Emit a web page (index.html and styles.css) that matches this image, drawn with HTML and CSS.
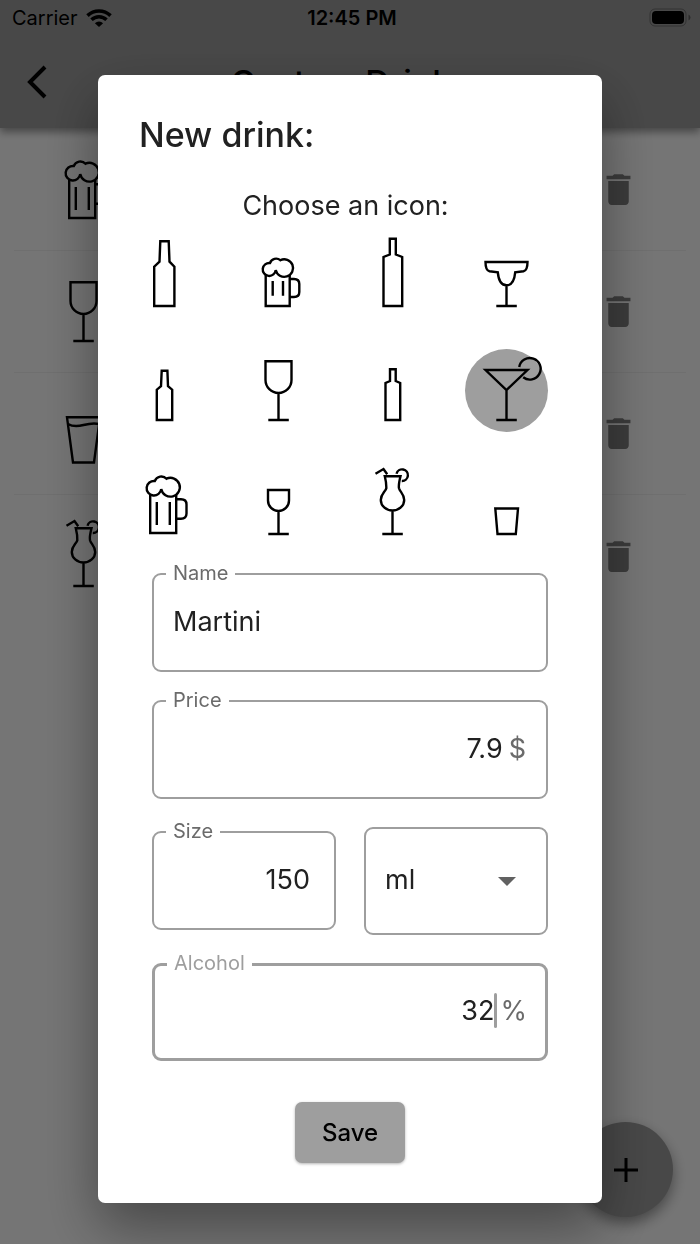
FILE: index.html
```
<!DOCTYPE html>
<html lang="en">
<head>
    <meta charset="UTF-8">
    <meta name="viewport" content="width=device-width, initial-scale=1.0">
    <title>Custom Drinks</title>
    <link rel="stylesheet" href="styles.css">
</head>
<body>
    <!-- Shared icon shapes -->
    <svg class="sprite" aria-hidden="true">
        <symbol id="bottle-large" viewBox="0 0 83 83">
            <path d="M31.2 71V31.7L36.5 26.7L37.3 6.3H45.7L46.5 26.7L51.4 31.7V71Z"/>
        </symbol>
        <symbol id="beer-small" viewBox="0 0 83 83">
            <path d="M28.7 40V71H52.7V40M35.7 46V60.7M46 46V60.7M52.7 44H57Q62.3 44 62.3 49V57Q62.3 62 57 62H52.7"/>
            <path d="M38.7 35A6.5 6.5 0 1 1 33 28A6.5 6.5 0 0 1 43.3 25.2A8.8 8.8 0 1 1 38.7 35Z"/>
        </symbol>
        <symbol id="spirit-large" viewBox="0 0 83 83">
            <path d="M32.5 71V22L38.8 19.5V3.7H44.8V19.5L51.2 22V71Z"/>
        </symbol>
        <symbol id="margarita" viewBox="0 0 83 83">
            <path d="M20.5 27H62.5Q62.5 35.5 58.5 36.3L50.2 37.3Q49 50.3 41.5 50.3T32.8 37.3L24.5 36.3Q20.5 35.5 20.5 27ZM41.5 50.3V71M31.3 71H51.8"/>
        </symbol>
        <symbol id="bottle-small" viewBox="0 0 83 83">
            <path d="M33.8 71V40.7L38 37.2L38.7 21.7H44.4L45 37.2L49.2 40.7V71Z"/>
        </symbol>
        <symbol id="wine-large" viewBox="0 0 83 83">
            <path d="M28.5 12.2H54.5V31A13 13 0 0 1 28.5 31ZM41.5 44V71M31.3 71H51.8"/>
        </symbol>
        <symbol id="spirit-small" viewBox="0 0 83 83">
            <path d="M34.5 71V34L39 32V20.3H44.7V32L49.2 34V71Z"/>
        </symbol>
        <symbol id="martini" viewBox="0 0 83 83">
            <path d="M20.5 21H62.5L41.5 41ZM41.5 41V71M31.3 71H51.8M54.2 18A10.8 10.8 0 1 1 58.2 28.3"/>
        </symbol>
        <symbol id="beer-large" viewBox="0 0 83 83">
            <path d="M27.2 32V70H53.2V32M33.8 39V62M46.8 39V62M53.2 36.3H58Q63.5 36.3 63.5 41.5V50.5Q63.5 55.7 58 55.7H53.2"/>
            <path d="M38.2 26A7.3 7.3 0 1 1 31.8 18A7 7 0 0 1 43.5 15.7A9.4 9.4 0 1 1 38.2 26Z"/>
        </symbol>
        <symbol id="wine-small" viewBox="0 0 83 83">
            <path d="M31 27H52V37.5A10.5 10.5 0 0 1 31 37.5ZM41.5 48V71M31.3 71H51.8"/>
        </symbol>
        <symbol id="hurricane" viewBox="0 0 83 83">
            <path d="M33.8 13.3H49.5Q47.3 22 48 25.3C49 29 53.2 31 53.2 37A11.7 10.5 0 0 1 29.8 37C29.8 31 34.2 29 35.3 25.3Q35.5 20 33.8 13.3ZM41.5 47.5V71M31.3 71H51.8"/>
            <path d="M24.5 10.7L32.5 6L36.2 11.3M45.5 10.7A5.8 5.8 0 1 1 50.8 18"/>
        </symbol>
        <symbol id="shot" viewBox="0 0 83 83">
            <path d="M30.3 45.5H53L50.8 71H32.5Z"/>
        </symbol>
        <symbol id="water" viewBox="0 0 83 83">
            <path d="M25 25.3H58L52 70.5H31ZM26 32Q32 35.5 41.5 33T57 32"/>
        </symbol>
        <symbol id="trash" viewBox="0 0 24 24">
            <path d="M6 19c0 1.1.9 2 2 2h8c1.1 0 2-.9 2-2V7H6v12zM19 4h-3.5l-1-1h-5l-1 1H5v2h14V4z"/>
        </symbol>
    </svg>

    <div class="screen">
        <header class="app-header">
            <div class="status-bar">
                <span class="carrier">
                    Carrier
                    <svg class="wifi" viewBox="0 0 26 18" aria-hidden="true">
                        <path d="M1.5 6.6A16.5 16.5 0 0 1 24.5 6.6M5.5 10.8A10.8 10.8 0 0 1 20.5 10.8"/>
                        <path class="solid" d="M8.9 14.2A6 6 0 0 1 17.1 14.2L13 18Z"/>
                    </svg>
                </span>
                <span class="clock">12:45 PM</span>
                <svg class="battery" viewBox="0 0 43 20" aria-hidden="true">
                    <rect class="case" x="1" y="1" width="36" height="17" rx="5"/>
                    <rect x="3" y="3" width="32" height="13" rx="4"/>
                    <path class="cap" d="M39.5 6.5Q41.5 7.5 41.5 9.5T39.5 12.5Z"/>
                </svg>
            </div>
            <div class="nav-bar">
                <button class="back" aria-label="Back">
                    <svg viewBox="0 0 24 36"><path d="M21 3L6 18L21 33"/></svg>
                </button>
                <h1>Custom Drinks</h1>
            </div>
        </header>

        <ul class="drink-list">
            <li>
                <svg class="drink-icon"><use href="#beer-large"/></svg>
                <button class="delete" aria-label="Delete"><svg><use href="#trash"/></svg></button>
            </li>
            <li>
                <svg class="drink-icon"><use href="#wine-large"/></svg>
                <button class="delete" aria-label="Delete"><svg><use href="#trash"/></svg></button>
            </li>
            <li>
                <svg class="drink-icon"><use href="#water"/></svg>
                <button class="delete" aria-label="Delete"><svg><use href="#trash"/></svg></button>
            </li>
            <li>
                <svg class="drink-icon"><use href="#hurricane"/></svg>
                <button class="delete" aria-label="Delete"><svg><use href="#trash"/></svg></button>
            </li>
        </ul>

        <button class="add" aria-label="Add drink">
            <svg viewBox="0 0 24 24"><path d="M12 0V24M0 12H24"/></svg>
        </button>
    </div>

    <div class="overlay">
        <form class="dialog" role="dialog" aria-labelledby="dialogTitle">
            <h2 id="dialogTitle">New drink:</h2>
            <p class="hint">Choose an icon:</p>

            <div class="icon-grid" role="radiogroup" aria-label="Choose an icon">
                <label><input type="radio" name="icon" aria-label="Large bottle"><svg class="drink-icon"><use href="#bottle-large"/></svg></label>
                <label><input type="radio" name="icon" aria-label="Small beer"><svg class="drink-icon"><use href="#beer-small"/></svg></label>
                <label><input type="radio" name="icon" aria-label="Large spirit"><svg class="drink-icon"><use href="#spirit-large"/></svg></label>
                <label><input type="radio" name="icon" aria-label="Margarita"><svg class="drink-icon"><use href="#margarita"/></svg></label>
                <label><input type="radio" name="icon" aria-label="Small bottle"><svg class="drink-icon"><use href="#bottle-small"/></svg></label>
                <label><input type="radio" name="icon" aria-label="Large wine"><svg class="drink-icon"><use href="#wine-large"/></svg></label>
                <label><input type="radio" name="icon" aria-label="Small spirit"><svg class="drink-icon"><use href="#spirit-small"/></svg></label>
                <label><input type="radio" name="icon" aria-label="Martini" checked><svg class="drink-icon"><use href="#martini"/></svg></label>
                <label><input type="radio" name="icon" aria-label="Large beer"><svg class="drink-icon"><use href="#beer-large"/></svg></label>
                <label><input type="radio" name="icon" aria-label="Small wine"><svg class="drink-icon"><use href="#wine-small"/></svg></label>
                <label><input type="radio" name="icon" aria-label="Cocktail"><svg class="drink-icon"><use href="#hurricane"/></svg></label>
                <label><input type="radio" name="icon" aria-label="Shot"><svg class="drink-icon"><use href="#shot"/></svg></label>
            </div>

            <div class="fields">
                <fieldset class="field">
                    <legend><label for="name">Name</label></legend>
                    <div class="control">
                        <input type="text" id="name" value="Martini">
                    </div>
                </fieldset>

                <fieldset class="field number">
                    <legend><label for="price">Price</label></legend>
                    <div class="control">
                        <input type="text" id="price" inputmode="decimal" value="7.9">
                        <span class="suffix">$</span>
                    </div>
                </fieldset>

                <div class="field-row">
                    <fieldset class="field number">
                        <legend><label for="size">Size</label></legend>
                        <div class="control roomy">
                            <input type="text" id="size" inputmode="numeric" value="150">
                        </div>
                    </fieldset>
                    <div class="unit">
                        <select id="unit" aria-label="Unit">
                            <option>ml</option>
                            <option>cl</option>
                            <option>l</option>
                        </select>
                    </div>
                </div>

                <fieldset class="field number active">
                    <legend><label for="alcohol">Alcohol</label></legend>
                    <div class="control">
                        <input type="text" id="alcohol" inputmode="decimal" value="32">
                        <span class="caret"></span>
                        <span class="suffix">%</span>
                    </div>
                </fieldset>
            </div>

            <button type="button" class="save">Save</button>
        </form>
    </div>
</body>
</html>
```
FILE: styles.css
```
* {
    box-sizing: border-box;
}
body {
    margin: 0;
    font-family: Inter, "Liberation Sans", sans-serif;
    color: #212121;
    background-color: #fff;
}
button {
    padding: 0;
    border: none;
    background: none;
    font-family: inherit;
    cursor: pointer;
}
svg {
    display: block;
}
.sprite {
    position: absolute;
    width: 0;
    height: 0;
}
.screen {
    min-height: 100vh;
}

/* Header */
.app-header {
    background-color: #9e9e9e;
    color: #000;
    box-shadow: 0 4px 8px rgba(0, 0, 0, 0.4);
}
.status-bar {
    display: grid;
    grid-template-columns: 1fr auto 1fr;
    align-items: center;
    height: 36px;
    padding: 0 8px 0 12px;
    font-size: 20px;
}
.carrier {
    display: flex;
    align-items: center;
    gap: 8px;
}
.wifi {
    width: 26px;
    height: 18px;
    fill: none;
    stroke: #000;
    stroke-width: 3.6;
}
.wifi .solid {
    fill: #000;
    stroke: none;
}
.clock {
    font-weight: 600;
}
.battery {
    justify-self: end;
    width: 43px;
    height: 20px;
}
.battery .case {
    fill: none;
    stroke: rgba(0, 0, 0, 0.3);
    stroke-width: 1;
}
.battery .cap {
    fill: rgba(0, 0, 0, 0.4);
}
.nav-bar {
    display: grid;
    grid-template-columns: 1fr auto 1fr;
    align-items: center;
    height: 92px;
    padding: 0 24px;
}
.nav-bar h1 {
    margin: 0;
    font-size: 34px;
    font-weight: 500;
}
.back {
    justify-self: start;
}
.back svg {
    width: 24px;
    height: 36px;
    fill: none;
    stroke: #000;
    stroke-width: 4;
}

/* List behind the dialog */
.drink-list {
    margin: 0;
    padding: 1px 14px;
    list-style: none;
}
.drink-list li {
    display: flex;
    align-items: center;
    justify-content: space-between;
    height: 122px;
    padding: 0 47px 0 28px;
    border-bottom: 1px solid #f2f2f2;
}
.drink-list li:last-child {
    border-bottom: none;
}
.drink-icon {
    width: 83px;
    height: 83px;
    fill: none;
    stroke: #000;
    stroke-width: 2.4;
}
.delete svg {
    width: 41px;
    height: 41px;
    fill: #828282;
}
.add {
    position: fixed;
    right: 27px;
    bottom: 27px;
    display: flex;
    align-items: center;
    justify-content: center;
    width: 95px;
    height: 95px;
    border-radius: 50%;
    background-color: #9e9e9e;
    box-shadow: 0 6px 14px rgba(0, 0, 0, 0.4);
}
.add svg {
    width: 24px;
    height: 24px;
    stroke: #000;
    stroke-width: 3;
}

/* Dialog */
.overlay {
    position: absolute;
    inset: 0;
    display: flex;
    align-items: center;
    padding: 34px 14% 0;
    background-color: rgba(0, 0, 0, 0.54);
}
.dialog {
    flex: 1;
    display: flex;
    flex-direction: column;
    min-width: 0;
    padding: 40px 0;
    border-radius: 7px;
    background-color: #fff;
    box-shadow: 0 24px 56px rgba(0, 0, 0, 0.4);
}
.dialog h2 {
    margin: 0;
    padding-left: 41px;
    font-size: 34px;
    line-height: 40px;
    font-weight: 500;
}
.hint {
    margin: 33px 0 11px;
    padding-right: 9px;
    font-size: 27px;
    line-height: 36px;
    text-align: center;
}
.icon-grid {
    display: grid;
    grid-template-columns: repeat(4, 83px);
    justify-content: space-between;
    row-gap: 31px;
    padding: 0 54px 0 25px;
}
.icon-grid label {
    position: relative;
    cursor: pointer;
}
.icon-grid input {
    position: absolute;
    inset: 0;
    margin: 0;
    opacity: 0;
}
.icon-grid input:checked + svg {
    border-radius: 50%;
    background-color: #9e9e9e;
    overflow: visible;
}

/* Form fields */
.fields {
    display: flex;
    flex-direction: column;
    gap: 17px;
    padding: 16px 54px 0;
}
.field {
    min-width: 0;
    margin: 0;
    padding: 0;
    border: 2px solid #9e9e9e;
    border-radius: 9px;
}
.field legend {
    margin-left: 12px;
    padding: 0 7px 2px;
    font-size: 20px;
    line-height: 22px;
    color: #6b6b6b;
}
.control {
    display: flex;
    align-items: center;
    height: 84px;
    padding: 0 20px 14px 19px;
}
.control.roomy {
    padding-right: 24px;
}
.control input {
    flex: 1;
    width: 100%;
    min-width: 0;
    padding: 0;
    border: none;
    outline: none;
    background: none;
    font-family: inherit;
    font-size: 27px;
    color: #212121;
}
.number input {
    text-align: right;
}
.suffix {
    padding-left: 6px;
    font-size: 27px;
    color: #6b6b6b;
}
.field-row {
    display: grid;
    grid-template-columns: repeat(2, minmax(0, 1fr));
    align-items: start;
    gap: 28px;
    padding-top: 4px;
}
.unit {
    padding-top: 7px;
}
.unit select {
    width: 100%;
    height: 108px;
    padding: 0 19px 4px;
    border: 2px solid #9e9e9e;
    border-radius: 9px;
    appearance: none;
    background: url("data:image/svg+xml,%3Csvg xmlns='http://www.w3.org/2000/svg' width='18' height='9'%3E%3Cpath d='M0 0H18L9 9Z' fill='%23616161'/%3E%3C/svg%3E") no-repeat right 30px center;
    font-family: inherit;
    font-size: 27px;
    color: #212121;
}
.field.active {
    border-width: 3px;
}
.active legend {
    color: #9e9e9e;
}
.active .control {
    height: 82px;
    padding-right: 18px;
}
.caret {
    width: 3px;
    height: 35px;
    border-radius: 2px;
    background-color: #9e9e9e;
}
.caret + .suffix {
    padding-left: 3px;
}

.save {
    align-self: center;
    width: 110px;
    height: 61px;
    margin-top: 41px;
    border-radius: 7px;
    background-color: #9e9e9e;
    box-shadow: 0 1px 3px rgba(0, 0, 0, 0.3);
    font-size: 24px;
    font-weight: 500;
    color: #000;
}
```
